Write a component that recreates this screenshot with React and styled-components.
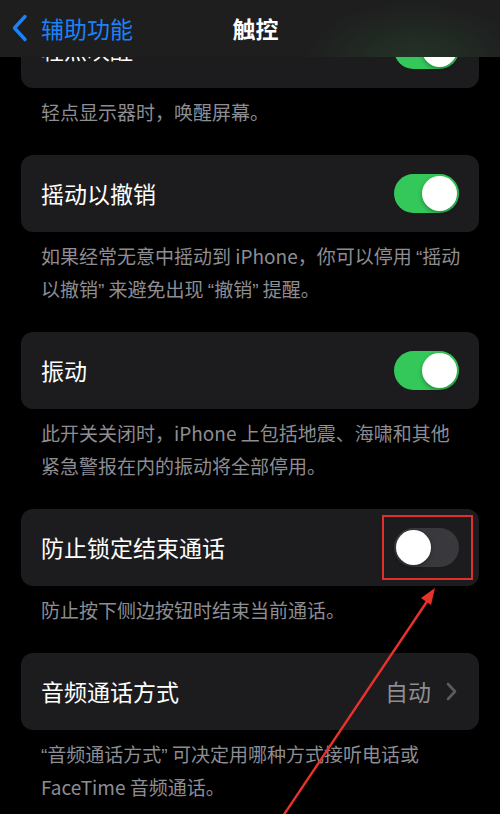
import React from "react";
import styled, { createGlobalStyle } from "styled-components";

const GlobalStyle = createGlobalStyle`
  html, body {
    margin: 0;
    padding: 0;
    background: #000;
  }
  body {
    font-family: "Noto Sans CJK SC", "Noto Sans", "Liberation Sans", sans-serif;
  }
`;

// curly quotes are drawn with a Latin font so they stay narrow, as on iOS
const withQuotes = (text) =>
  text.split(/([“”])/).map((part, i) =>
    part === "“" || part === "”" ? <Quote key={i}>{part}</Quote> : part
  );

const sections = [
  {
    label: "轻点唤醒",
    on: true,
    footer: ["轻点显示器时，唤醒屏幕。"],
  },
  {
    label: "摇动以撤销",
    on: true,
    footer: [
      "如果经常无意中摇动到 iPhone，你可以停用 “摇动",
      "以撤销” 来避免出现 “撤销” 提醒。",
    ],
  },
  {
    label: "振动",
    on: true,
    footer: ["此开关关闭时，iPhone 上包括地震、海啸和其他", "紧急警报在内的振动将全部停用。"],
  },
  {
    label: "防止锁定结束通话",
    on: false,
    marked: true,
    footer: ["防止按下侧边按钮时结束当前通话。"],
  },
  {
    label: "音频通话方式",
    value: "自动",
    footer: ["“音频通话方式” 可决定用哪种方式接听电话或", "FaceTime 音频通话。"],
  },
];

const Toggle = ({ on, marked }) => (
  <ToggleWrap>
    <Track $on={on}>
      <Knob $on={on} />
    </Track>
    {marked && <Highlight />}
  </ToggleWrap>
);

const App = () => {
  return (
    <Screen>
      <GlobalStyle />
      <NavBar>
        <BackButton>
          <svg width="17" height="28" viewBox="0 0 17 28">
            <path
              d="M14 2.5 L3.5 14 L14 25.5"
              fill="none"
              stroke="#1a82fb"
              strokeWidth="3.4"
              strokeLinecap="round"
              strokeLinejoin="round"
            />
          </svg>
          <span>辅助功能</span>
        </BackButton>
        <Title>触控</Title>
        <span />
      </NavBar>

      <Content>
        {sections.map((s) => (
          <Group key={s.label}>
            <Card>
              <Label>{s.label}</Label>
              {s.value ? (
                <Detail>
                  <span>{s.value}</span>
                  <svg width="11" height="19" viewBox="0 0 11 19">
                    <path
                      d="M2 2 L9 9.5 L2 17"
                      fill="none"
                      stroke="#5a5a5f"
                      strokeWidth="2.6"
                      strokeLinecap="round"
                      strokeLinejoin="round"
                    />
                  </svg>
                </Detail>
              ) : (
                <Toggle on={s.on} marked={s.marked} />
              )}
            </Card>
            <Footer>
              {s.footer.map((line) => (
                <Line key={line}>{withQuotes(line)}</Line>
              ))}
            </Footer>
          </Group>
        ))}
      </Content>

      <Arrow width="500" height="814" viewBox="0 0 500 814">
        <line x1="283" y1="816" x2="428" y2="600" stroke="#e8322b" strokeWidth="2.4" />
        <polygon points="435,588 421,598 431,605" fill="#e8322b" />
      </Arrow>
    </Screen>
  );
};

export default App;

const Screen = styled.div`
  position: relative;
  width: 500px;
  height: 814px;
  overflow: hidden;
  background: #000;
`;

const NavBar = styled.div`
  position: absolute;
  top: 0;
  left: 0;
  right: 0;
  height: 57px;
  z-index: 2;
  display: grid;
  grid-template-columns: 1fr auto 1fr;
  align-items: center;
  padding: 0 0 0 11px;
  background:
    radial-gradient(ellipse 110px 60px at 415px 62px, rgba(60, 140, 70, 0.2), transparent),
    #1e1e1f;
`;

const BackButton = styled.div`
  display: flex;
  align-items: center;
  gap: 13px;
  color: #1a82fb;
  font-size: 23px;
  line-height: 1;
  padding-bottom: 1px;
`;

const Title = styled.div`
  color: #fff;
  font-size: 23px;
  font-weight: 600;
  line-height: 1;
`;

const Content = styled.div`
  padding: 11px 21px 0;
`;

const Group = styled.div`
  display: flex;
  flex-direction: column;
`;

const Card = styled.div`
  height: 77px;
  flex-shrink: 0;
  display: flex;
  align-items: center;
  padding: 0 20px;
  background: #1c1c1e;
  border-radius: 12px;
`;

const Label = styled.div`
  flex: 1;
  color: #fff;
  font-size: 23px;
  line-height: 1;
`;

const Detail = styled.div`
  display: flex;
  align-items: center;
  gap: 15px;
  color: #8d8d92;
  font-size: 23px;
  line-height: 1;
  margin-right: 2px;
`;

const ToggleWrap = styled.div`
  position: relative;
`;

const Track = styled.div`
  width: 65px;
  height: 39px;
  border-radius: 20px;
  background: ${(p) => (p.$on ? "#34c759" : "#39393d")};
  display: flex;
  align-items: center;
  justify-content: ${(p) => (p.$on ? "flex-end" : "flex-start")};
  padding: 0 2px;
  box-sizing: border-box;
`;

const Knob = styled.div`
  width: 35px;
  height: 35px;
  border-radius: 50%;
  background: #fff;
  box-shadow: 0 2px 4px rgba(0, 0, 0, 0.3);
`;

const Highlight = styled.div`
  position: absolute;
  left: -12px;
  right: -14px;
  top: -13px;
  bottom: -13px;
  border: 2px solid #e0302b;
`;

const Footer = styled.div`
  padding: 7px 20px 27px;
  color: #8d8d93;
  font-size: 19px;
  white-space: nowrap;
`;

const Line = styled.div`
  height: 33px;
  line-height: 33px;
  overflow: visible;
`;

const Quote = styled.span`
  font-family: "Liberation Sans", sans-serif;
  line-height: 0;
`;

const Arrow = styled.svg`
  position: absolute;
  top: 0;
  left: 0;
  pointer-events: none;
  z-index: 3;
`;
